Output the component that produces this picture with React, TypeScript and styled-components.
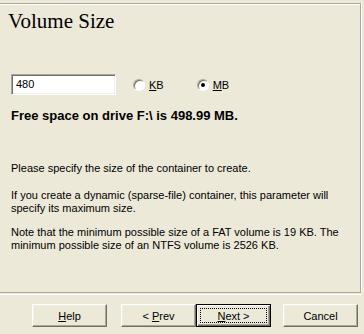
import React from "react";
import styled, { createGlobalStyle, css } from "styled-components";

const Global = createGlobalStyle`
  html, body { margin: 0; padding: 0; background: #ECE9D8; }
  body { font-family: "Liberation Sans", Arial, sans-serif; font-size: 11px; color: #000; }
`;

const Page = styled.div`
  width: 364px;
  height: 334px;
  display: flex;
  flex-direction: column;
  background: #ECE9D8;
  overflow: hidden;
`;

const Frame = styled.div`
  box-sizing: border-box;
  margin-top: 3px;
  width: 361px;
  height: 289px;
  border-top: 1px solid #ACA899;
  border-right: 1px solid #ACA899;
  box-shadow: inset 0 1px 0 #fff, 1px 0 0 #fff;
  padding: 5px 0 0 8px;
  display: flex;
  flex-direction: column;
`;

const Title = styled.h1`
  margin: 0;
  font-family: "Liberation Serif", "Times New Roman", serif;
  font-weight: normal;
  font-size: 21px;
  line-height: 24px;
`;

const Body = styled.div`
  padding-left: 3px;
  display: flex;
  flex-direction: column;
`;

const SizeRow = styled.div`
  margin-top: 41px;
  display: flex;
  align-items: center;
  height: 21px;
`;

const Input = styled.div`
  box-sizing: border-box;
  width: 105px;
  height: 21px;
  background: #fff;
  border-top: 1px solid #ACA899;
  border-left: 1px solid #ACA899;
  border-bottom: 1px solid #fff;
  border-right: 1px solid #fff;
  box-shadow: inset 1px 1px 0 #716F64, inset -1px -1px 0 #F1EFE2;
  padding: 0 0 0 4px;
  line-height: 18px;
`;

const RadioOption = styled.label<{ $offset: number }>`
  display: flex;
  align-items: center;
  margin-left: ${(p) => p.$offset}px;
  gap: 4px;
`;

const RadioCircle = styled.span<{ $checked?: boolean }>`
  position: relative;
  box-sizing: border-box;
  width: 12px;
  height: 12px;
  border-radius: 50%;
  background: #fff;
  border: 1px solid;
  border-color: #ACA899 #fff #fff #ACA899;
  box-shadow: inset 1px 1px 0 #716F64;
  ${(p) =>
    p.$checked &&
    css`
      &::after {
        content: "";
        position: absolute;
        left: 3px;
        top: 3px;
        width: 4px;
        height: 4px;
        border-radius: 50%;
        background: #000;
      }
    `}
`;

const Key = styled.span`
  text-decoration: underline;
`;

const FreeSpace = styled.div`
  margin-top: 13px;
  font-weight: bold;
  font-size: 13px;
  line-height: 16px;
`;

const Para = styled.p<{ $gap: number }>`
  margin: ${(p) => p.$gap}px 0 0 0;
  line-height: 13px;
  width: 345px;
`;

const Separator = styled.div`
  width: 361px;
  height: 1px;
  border-top: 1px solid #ACA899;
  border-bottom: 1px solid #fff;
`;

const ButtonRow = styled.div`
  display: flex;
  padding: 9px 0 0 32px;
`;

const Button = styled.div<{ $gapBefore?: number; $default?: boolean }>`
  box-sizing: border-box;
  position: relative;
  width: 75px;
  height: 23px;
  margin-left: ${(p) => p.$gapBefore ?? 0}px;
  display: flex;
  align-items: center;
  justify-content: center;
  background: #ECE9D8;
  border: 1px solid;
  border-color: #fff #716F64 #716F64 #fff;
  box-shadow: inset -1px -1px 0 #ACA899, inset 1px 1px 0 #F1EFE2;
  ${(p) =>
    p.$default &&
    css`
      border: 1px solid #000;
      box-shadow: inset 1px 1px 0 #fff, inset -1px -1px 0 #716F64, inset -2px -2px 0 #ACA899;
      &::after {
        content: "";
        position: absolute;
        left: 3px;
        top: 3px;
        right: 3px;
        bottom: 3px;
        border: 1px dotted #000;
      }
    `}
`;

export default function App() {
  return (
    <Page>
      <Global />
      <Frame>
        <Title>Volume Size</Title>
        <Body>
          <SizeRow>
            <Input>480</Input>
            <RadioOption $offset={17}>
              <RadioCircle />
              <span><Key>K</Key>B</span>
            </RadioOption>
            <RadioOption $offset={33}>
              <RadioCircle $checked />
              <span><Key>M</Key>B</span>
            </RadioOption>
          </SizeRow>
          <FreeSpace>Free space on drive F:\ is 498.99 MB.</FreeSpace>
          <Para $gap={38}>Please specify the size of the container to create.</Para>
          <Para $gap={14}>
            If you create a dynamic (sparse-file) container, this parameter will specify its maximum size.
          </Para>
          <Para $gap={11}>
            Note that the minimum possible size of a FAT volume is 19 KB. The minimum possible size of an NTFS volume is 2526 KB.
          </Para>
        </Body>
      </Frame>
      <Separator />
      <ButtonRow>
        <Button><span><Key>H</Key>elp</span></Button>
        <Button $gapBefore={14}><span>&lt; <Key>P</Key>rev</span></Button>
        <Button $default><span><Key>N</Key>ext &gt;</span></Button>
        <Button $gapBefore={12}>Cancel</Button>
      </ButtonRow>
    </Page>
  );
}
